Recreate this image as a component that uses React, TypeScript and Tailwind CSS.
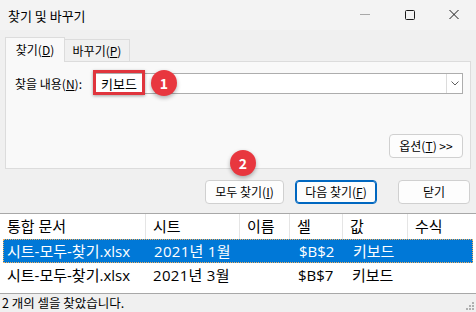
import React from 'react';

const font = { fontFamily: '"Noto Sans CJK KR", "Noto Sans", sans-serif' };
const tableFont = { fontFamily: '"Open Sans", "Noto Sans CJK KR", sans-serif' };

const Badge = ({ n, className }: { n: string; className: string }) => (
  <span
    className={`absolute flex h-[26px] w-[26px] items-center justify-center rounded-full bg-[#e8373f] text-[14px] font-bold leading-none text-white shadow-[0_2px_4px_rgba(0,0,0,0.3)] ${className}`}
  >
    {n}
  </span>
);

const Btn = ({ children, w, primary }: { children: React.ReactNode; w: string; primary?: boolean }) => (
  <button
    className={`flex h-[24px] ${w} items-center justify-center rounded-[4px] bg-[#fdfdfd] text-[12px] leading-none text-black ${
      primary ? 'border border-[#0067c0] shadow-[inset_0_0_0_1px_#0067c0]' : 'border border-[#d0d0d0]'
    }`}
  >
    {children}
  </button>
);

const cols = 'grid grid-cols-[146px_94px_50px_53px_65px_1fr]';

const rows = [
  { book: '시트-모두-찾기.xlsx', sheet: '2021년 1월', cell: '$B$2', value: '키보드', selected: true },
  { book: '시트-모두-찾기.xlsx', sheet: '2021년 3월', cell: '$B$7', value: '키보드', selected: false },
];

export default function App() {
  return (
    <div className="flex h-[312px] w-[476px] flex-col overflow-hidden bg-[#f0f0f0] text-black" style={font}>
      {/* Title bar */}
      <div className="flex h-[30px] items-center bg-[#f3f3f3] pl-[8px]">
        <span className="text-[13px] leading-none">찾기 및 바꾸기</span>
        <div className="ml-auto flex items-center">
          <svg width="45" height="28" viewBox="0 0 45 28">
            <line x1="19" y1="13.5" x2="29" y2="13.5" stroke="#a8a8a8" strokeWidth="1" />
          </svg>
          <svg width="45" height="28" viewBox="0 0 45 28">
            <rect x="19.5" y="9.5" width="9" height="9" rx="1" fill="none" stroke="#1a1a1a" strokeWidth="1" />
          </svg>
          <svg width="45" height="28" viewBox="0 0 45 28">
            <path d="M18.5 9 L27.5 18 M27.5 9 L18.5 18" stroke="#1a1a1a" strokeWidth="1" />
          </svg>
        </div>
      </div>

      {/* Tabs */}
      <div className="mt-[7px] flex h-[24px] items-end pl-[5px]">
        <div className="relative z-10 -mb-px flex h-[25px] w-[60px] items-center justify-center border border-b-0 border-[#dcdcdc] bg-[#f9f9f9] text-[12px] leading-none">
          찾기(<span className="underline">D</span>)
        </div>
        <div className="flex h-[22px] w-[65px] items-center justify-center border border-b-0 border-l-0 border-[#dcdcdc] text-[12px] leading-none">
          바꾸기(<span className="underline">P</span>)
        </div>
      </div>

      {/* Panel */}
      <div className="mx-[5px] flex h-[108px] flex-col border border-[#dcdcdc] bg-[#f9f9f9] pl-[9px] pr-[7px] pt-[11px]">
        <div className="flex items-center">
          <span className="w-[78px] text-[12px] leading-none">
            찾을 내용(<span className="underline">N</span>):
          </span>
          <div className="relative flex h-[21px] flex-1 items-center border border-[#adadad] bg-white">
            <span className="pl-[7px] text-[13px] leading-none">키보드</span>
            <div className="ml-auto flex h-full w-[16px] items-center justify-center border-l border-[#dcdcdc]">
              <svg width="8" height="5" viewBox="0 0 8 5">
                <path d="M0.5 0.5 L4 4 L7.5 0.5" fill="none" stroke="#606060" strokeWidth="1" />
              </svg>
            </div>
            <span className="absolute left-[-1px] top-[-4px] h-[25px] w-[52px] border-[3px] border-[#e0353d] shadow-[0_1px_3px_rgba(0,0,0,0.35)]" />
            <Badge n="1" className="left-[57px] top-[-4px]" />
          </div>
        </div>
        <div className="mt-auto mb-[10px] flex justify-end">
          <Btn w="w-[74px]">
            옵션(<span className="underline">T</span>) &gt;&gt;
          </Btn>
        </div>
      </div>

      {/* Buttons */}
      <div className="relative mt-[11px] flex items-center justify-end pr-[6px]">
        <Badge n="2" className="left-[230px] top-[-30px]" />
        <Btn w="w-[79px]">
          모두 찾기(<span className="underline">I</span>)
        </Btn>
        <div className="ml-[11px]">
          <Btn w="w-[82px]" primary>
            다음 찾기(<span className="underline">F</span>)
          </Btn>
        </div>
        <div className="ml-[21px]">
          <Btn w="w-[72px]">닫기</Btn>
        </div>
      </div>

      {/* Results table */}
      <div
        className="mt-[9px] flex h-[81px] flex-col border-y border-[#a8a8a8] bg-white text-[15px] leading-none"
        style={tableFont}
      >
        <div className={`${cols} h-[25px] items-center`}>
          {['통합 문서', '시트', '이름', '셀', '값', '수식'].map((h, i) => (
            <div key={h} className={`flex h-full items-center pl-[7px] ${i < 5 ? 'border-r border-[#e5e5e5]' : ''}`}>
              {h}
            </div>
          ))}
        </div>
        {rows.map((r) => (
          <div
            key={r.sheet}
            className={
              r.selected
                ? 'mx-[3px] grid h-[24px] grid-cols-[143px_94px_50px_53px_65px_1fr] items-center border border-dotted border-[#f0b060] bg-[#0078d7] text-white'
                : `${cols} h-[24px] items-center`
            }
          >
            <div className={r.selected ? 'pl-[3px]' : 'pl-[7px]'}>{r.book}</div>
            <div className="pl-[7px] tracking-[0.3px]">{r.sheet}</div>
            <div />
            <div className="pl-[8px]">{r.cell}</div>
            <div className="pl-[9px]">{r.value}</div>
            <div />
          </div>
        ))}
      </div>

      {/* Status bar */}
      <div className="flex flex-1 items-center pl-[2px] text-[12.5px] leading-none">
        2 개의 셀을 찾았습니다.
        <svg width="10" height="10" viewBox="0 0 10 10" className="ml-auto mr-[2px] mb-[2px] self-end">
          <g fill="#b0b0b0">
            <rect x="8" y="2" width="2" height="2" />
            <rect x="5" y="5" width="2" height="2" />
            <rect x="8" y="5" width="2" height="2" />
            <rect x="2" y="8" width="2" height="2" />
            <rect x="5" y="8" width="2" height="2" />
            <rect x="8" y="8" width="2" height="2" />
          </g>
        </svg>
      </div>
    </div>
  );
}
